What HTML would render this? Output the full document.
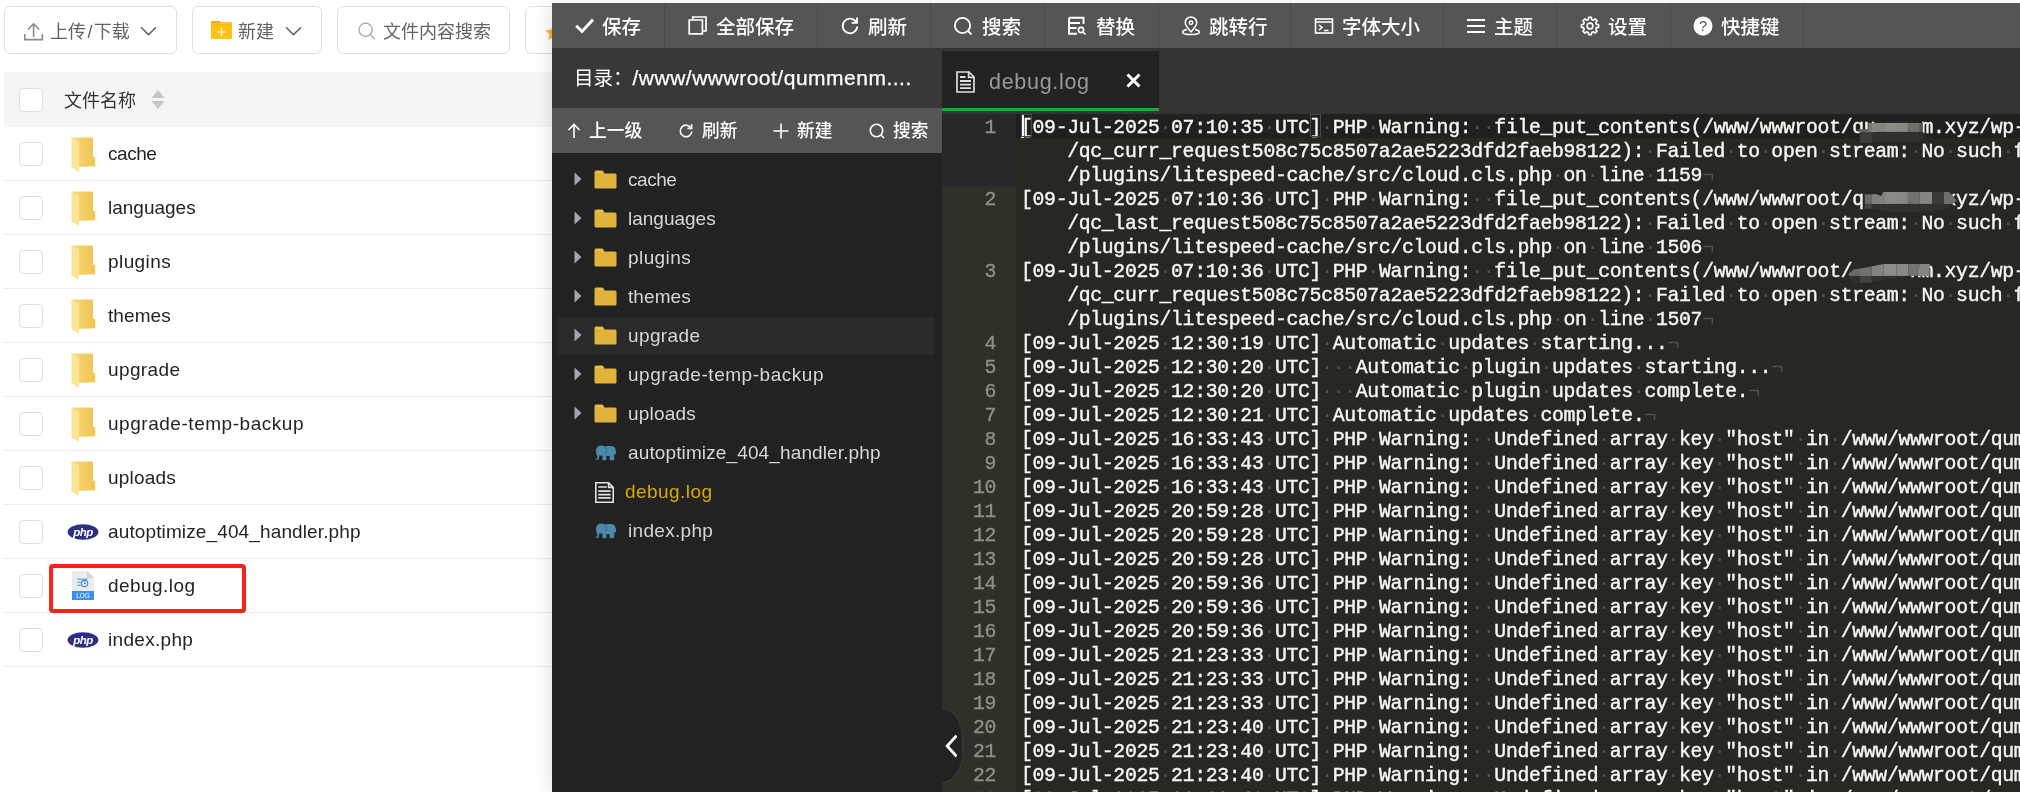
<!DOCTYPE html>
<html lang="zh-CN"><head><meta charset="utf-8"><title>debug.log</title>
<style>
html,body{margin:0;padding:0}
body{will-change:transform;width:2020px;height:792px;overflow:hidden;background:#fff;position:relative;
 font-family:"Liberation Sans","Noto Sans CJK SC",sans-serif;color:#333;font-size:18px}
.abs{position:absolute}
/* left panel */
.btn{position:absolute;top:6px;height:48px;box-sizing:border-box;border:1px solid #dcdfe6;border-radius:6px;background:#fff;color:#606266}
.btn span{position:absolute;top:1.5px;line-height:46px;font-size:18px;white-space:nowrap}
.btn svg{position:absolute}
.thead{position:absolute;left:4px;top:72px;width:560px;height:54px;background:#f5f5f5}
.ck{position:absolute;left:19px;width:24px;height:24px;box-sizing:border-box;border:1px solid #dcdfe6;border-radius:4px;background:#fff}
.row{position:absolute;left:4px;width:560px;height:54px;box-sizing:border-box;border-bottom:1px solid #ececec}
.fn{position:absolute;left:108px;font-size:19px;letter-spacing:0.5px;line-height:54px;color:#242424;white-space:nowrap}
/* dark panel */
#dp{position:absolute;left:552px;top:3px;width:1468px;height:789px;background:#333;box-shadow:-1px 0 16px rgba(0,0,0,.13)}
#tb{position:absolute;left:0;top:0;width:1468px;height:45px;background:#555}
.ti{position:absolute;top:0;height:45px;box-sizing:border-box;border-right:1px solid #4a4a4a;color:#fff;font-size:19.5px;line-height:45px;white-space:nowrap}
.ti span{position:absolute;top:2px;font-weight:500}
.ti svg{position:absolute}
#dir{position:absolute;left:0;top:45px;width:390px;height:60px;background:#383838;color:#fff;font-size:19.5px;line-height:60px;white-space:nowrap}
#stb{position:absolute;left:0;top:105px;width:390px;height:45px;background:#555;color:#fff;font-size:17.7px;line-height:45px;white-space:nowrap}
#stb span{position:absolute;top:1px;font-weight:500}
#stb svg{position:absolute}
#tree{position:absolute;left:0;top:150px;width:390px;height:639px;background:#222}
.tn{position:absolute;left:0;width:390px;height:39px;line-height:39px;color:#d6d6d6;font-size:19px;letter-spacing:0.5px;white-space:nowrap}
.tn span{position:absolute;left:76px;top:0}
.tn svg{position:absolute}
/* editor */
#tabbar{position:absolute;left:390px;top:45px;width:1078px;height:66px;background:#333}
#tab{position:absolute;left:0;top:3px;width:217px;height:57px;background:#222;border-bottom:3px solid #20a53a;color:#999;font-size:21.5px;letter-spacing:0.7px;line-height:62px;white-space:nowrap}
#ed{position:absolute;left:390px;top:111px;width:1078px;height:678px;background:#272822;overflow:hidden;
 font-family:"Liberation Mono","DejaVu Sans Mono",monospace;font-size:19.8px;letter-spacing:-0.327px;line-height:24px;color:#f8f8f2}
#gut{position:absolute;left:0;top:0;width:74px;height:678px;background:#2f3129;color:#8f908a}
.gn{position:absolute;right:20px;height:24px;line-height:24px;white-space:pre;margin-top:2px;-webkit-text-stroke:0.3px #8f908a}
.ln{position:absolute;left:79px;height:24px;line-height:24px;white-space:pre;margin-top:2px;-webkit-text-stroke:0.4px #f8f8f2}
.ln b{font-weight:normal;color:transparent;-webkit-text-stroke:0}
.ln i{font-style:normal;color:#52524d;-webkit-text-stroke:0}

</style></head>
<body>
<div id="left">
<div class="btn" style="left:4px;width:173px"><svg style="left:19px;top:15px" width="20" height="20" viewBox="0 0 20 20" fill="none" stroke="#8a8a8a" stroke-width="1.6"><path d="M9.6 15 V1.8 M4 7.5 L9.6 1.8 L15.2 7.5 M0.8 12 V17.6 H18.4 V12"/></svg><span style="left:45px">上传<b style="font-weight:normal;padding:0 1.4px">/</b>下载</span><svg style="left:135px;top:19px" width="18" height="11" viewBox="0 0 18 11" fill="none" stroke="#606266" stroke-width="1.5"><path d="M1 1.2 L8.5 8.6 L16 1.2"/></svg></div>
<div class="btn" style="left:192px;width:130px"><svg style="left:18px;top:14px" width="21" height="18" viewBox="0 0 21 18"><path d="M0 1 Q0 0 1 0 H8.5 L10 1.3 H20 Q21 1.3 21 2.3 V5 H0 Z" fill="#fba50c"/><path d="M0 3.6 H21 V17 Q21 18 20 18 H1 Q0 18 0 17 Z" fill="#ffc30f"/><path d="M1.2 2.6 H19.8" stroke="#fdd66a" stroke-width="0.7"/><path d="M10.5 6.7 V15.3 M6.2 11 H14.8" stroke="#fff" stroke-width="1.2"/></svg><span style="left:45px">新建</span><svg style="left:92px;top:19px" width="18" height="11" viewBox="0 0 18 11" fill="none" stroke="#606266" stroke-width="1.5"><path d="M1 1.2 L8.5 8.6 L16 1.2"/></svg></div>
<div class="btn" style="left:337px;width:173px"><svg style="left:20px;top:15px" width="19" height="19" viewBox="0 0 19 19" fill="none" stroke="#a6a8ad" stroke-width="1.3"><circle cx="7.6" cy="7.8" r="6.6"/><path d="M12.4 12.6 L17 17.2"/></svg><span style="left:45px">文件内容搜索</span></div>
<div class="btn" style="left:525px;width:120px"><svg style="left:19px;top:17px" width="17" height="17" viewBox="0 0 20 20"><path d="M10 0.5 L12.9 6.7 L19.6 7.5 L14.7 12.1 L16 18.8 L10 15.5 L4 18.8 L5.3 12.1 L0.4 7.5 L7.1 6.7 Z" fill="#fcb427"/></svg></div>
<div class="thead" style="height:55px"><div class="ck" style="left:15px;top:16px"></div><span class="abs" style="left:60px;top:2px;line-height:54px;font-size:18px;color:#333">文件名称</span><svg class="abs" style="left:147px;top:18px" width="14" height="19" viewBox="0 0 14 19"><path d="M7 0 L13.5 8 H0.5 Z M7 19 L13.5 11 H0.5 Z" fill="#c6c6c8"/></svg></div>
<div class="row" style="top:127px"><div class="ck" style="left:15px;top:15px"></div>
<svg class="abs" style="left:67px;top:9.5px" width="25" height="36" viewBox="0 0 25 36">
<defs><linearGradient id="fg0" x1="0" y1="0" x2="1" y2="0"><stop offset="0" stop-color="#f8dc80"/><stop offset="0.45" stop-color="#f3cf66"/><stop offset="1" stop-color="#efc552"/></linearGradient></defs>
<path d="M0.4 0.6 H22 V19.3 L24.2 20.6 V29.2 L7.9 29.9 V5 Z" fill="url(#fg0)"/>
<path d="M0.4 0.6 L7.9 5 V35 L0.4 30.2 Z" fill="#fbe496"/>
</svg>
<span class="fn" style="left:104px;letter-spacing:-0.47px">cache</span></div>
<div class="row" style="top:181px"><div class="ck" style="left:15px;top:15px"></div>
<svg class="abs" style="left:67px;top:9.5px" width="25" height="36" viewBox="0 0 25 36">
<defs><linearGradient id="fg1" x1="0" y1="0" x2="1" y2="0"><stop offset="0" stop-color="#f8dc80"/><stop offset="0.45" stop-color="#f3cf66"/><stop offset="1" stop-color="#efc552"/></linearGradient></defs>
<path d="M0.4 0.6 H22 V19.3 L24.2 20.6 V29.2 L7.9 29.9 V5 Z" fill="url(#fg1)"/>
<path d="M0.4 0.6 L7.9 5 V35 L0.4 30.2 Z" fill="#fbe496"/>
</svg>
<span class="fn" style="left:104px;letter-spacing:-0.005px">languages</span></div>
<div class="row" style="top:235px"><div class="ck" style="left:15px;top:15px"></div>
<svg class="abs" style="left:67px;top:9.5px" width="25" height="36" viewBox="0 0 25 36">
<defs><linearGradient id="fg2" x1="0" y1="0" x2="1" y2="0"><stop offset="0" stop-color="#f8dc80"/><stop offset="0.45" stop-color="#f3cf66"/><stop offset="1" stop-color="#efc552"/></linearGradient></defs>
<path d="M0.4 0.6 H22 V19.3 L24.2 20.6 V29.2 L7.9 29.9 V5 Z" fill="url(#fg2)"/>
<path d="M0.4 0.6 L7.9 5 V35 L0.4 30.2 Z" fill="#fbe496"/>
</svg>
<span class="fn" style="left:104px;letter-spacing:0.421px">plugins</span></div>
<div class="row" style="top:289px"><div class="ck" style="left:15px;top:15px"></div>
<svg class="abs" style="left:67px;top:9.5px" width="25" height="36" viewBox="0 0 25 36">
<defs><linearGradient id="fg3" x1="0" y1="0" x2="1" y2="0"><stop offset="0" stop-color="#f8dc80"/><stop offset="0.45" stop-color="#f3cf66"/><stop offset="1" stop-color="#efc552"/></linearGradient></defs>
<path d="M0.4 0.6 H22 V19.3 L24.2 20.6 V29.2 L7.9 29.9 V5 Z" fill="url(#fg3)"/>
<path d="M0.4 0.6 L7.9 5 V35 L0.4 30.2 Z" fill="#fbe496"/>
</svg>
<span class="fn" style="left:104px;letter-spacing:0.084px">themes</span></div>
<div class="row" style="top:343px"><div class="ck" style="left:15px;top:15px"></div>
<svg class="abs" style="left:67px;top:9.5px" width="25" height="36" viewBox="0 0 25 36">
<defs><linearGradient id="fg4" x1="0" y1="0" x2="1" y2="0"><stop offset="0" stop-color="#f8dc80"/><stop offset="0.45" stop-color="#f3cf66"/><stop offset="1" stop-color="#efc552"/></linearGradient></defs>
<path d="M0.4 0.6 H22 V19.3 L24.2 20.6 V29.2 L7.9 29.9 V5 Z" fill="url(#fg4)"/>
<path d="M0.4 0.6 L7.9 5 V35 L0.4 30.2 Z" fill="#fbe496"/>
</svg>
<span class="fn" style="left:104px;letter-spacing:0.386px">upgrade</span></div>
<div class="row" style="top:397px"><div class="ck" style="left:15px;top:15px"></div>
<svg class="abs" style="left:67px;top:9.5px" width="25" height="36" viewBox="0 0 25 36">
<defs><linearGradient id="fg5" x1="0" y1="0" x2="1" y2="0"><stop offset="0" stop-color="#f8dc80"/><stop offset="0.45" stop-color="#f3cf66"/><stop offset="1" stop-color="#efc552"/></linearGradient></defs>
<path d="M0.4 0.6 H22 V19.3 L24.2 20.6 V29.2 L7.9 29.9 V5 Z" fill="url(#fg5)"/>
<path d="M0.4 0.6 L7.9 5 V35 L0.4 30.2 Z" fill="#fbe496"/>
</svg>
<span class="fn" style="left:104px;letter-spacing:0.535px">upgrade-temp-backup</span></div>
<div class="row" style="top:451px"><div class="ck" style="left:15px;top:15px"></div>
<svg class="abs" style="left:67px;top:9.5px" width="25" height="36" viewBox="0 0 25 36">
<defs><linearGradient id="fg6" x1="0" y1="0" x2="1" y2="0"><stop offset="0" stop-color="#f8dc80"/><stop offset="0.45" stop-color="#f3cf66"/><stop offset="1" stop-color="#efc552"/></linearGradient></defs>
<path d="M0.4 0.6 H22 V19.3 L24.2 20.6 V29.2 L7.9 29.9 V5 Z" fill="url(#fg6)"/>
<path d="M0.4 0.6 L7.9 5 V35 L0.4 30.2 Z" fill="#fbe496"/>
</svg>
<span class="fn" style="left:104px;letter-spacing:0.213px">uploads</span></div>
<div class="row" style="top:505px"><div class="ck" style="left:15px;top:15px"></div>
<svg class="abs" style="left:63px;top:17.5px" width="32" height="18" viewBox="0 0 32 18">
<ellipse cx="16" cy="9" rx="15.4" ry="7.7" fill="#2d2f80"/>
<text x="16" y="13" text-anchor="middle" font-family="Liberation Sans, sans-serif" font-style="italic" font-weight="bold" font-size="11.5" fill="#fff" letter-spacing="-0.6">php</text>
</svg>
<span class="fn" style="left:104px;letter-spacing:0.125px">autoptimize_404_handler.php</span></div>
<div class="row" style="top:559px"><div class="ck" style="left:15px;top:15px"></div>
<svg class="abs" style="left:67px;top:12px" width="24" height="30" viewBox="0 0 24 30">
<path d="M1 0 H16 L23 7 V29 H1 Z" fill="#ebebec"/>
<path d="M16 0 L23 7 H16 Z" fill="#d6d6cc"/>
<rect x="1" y="20" width="22" height="9" fill="#3b8fe8"/>
<text x="12" y="27.3" text-anchor="middle" font-family="Liberation Sans, sans-serif" font-size="6.5" fill="#fff">LOG</text>
<circle cx="13.5" cy="12.5" r="3.2" fill="none" stroke="#3b8fe8" stroke-width="1.2"/>
<path d="M13.5 10.8 V12.7 H15" fill="none" stroke="#3b8fe8" stroke-width="1"/>
<path d="M6.5 8.2 H16.5 M6.5 11.2 H9.5 M6.5 14.2 H9.5" stroke="#3b8fe8" stroke-width="1.1"/>
</svg>
<span class="fn" style="left:104px;letter-spacing:0.435px">debug.log</span></div>
<div class="row" style="top:613px"><div class="ck" style="left:15px;top:15px"></div>
<svg class="abs" style="left:63px;top:17.5px" width="32" height="18" viewBox="0 0 32 18">
<ellipse cx="16" cy="9" rx="15.4" ry="7.7" fill="#2d2f80"/>
<text x="16" y="13" text-anchor="middle" font-family="Liberation Sans, sans-serif" font-style="italic" font-weight="bold" font-size="11.5" fill="#fff" letter-spacing="-0.6">php</text>
</svg>
<span class="fn" style="left:104px;letter-spacing:0.305px">index.php</span></div>
<div class="abs" style="left:49px;top:564px;width:197px;height:49px;box-sizing:border-box;border:4px solid #fa2117;border-radius:4px"></div>
</div>
<div id="dp">
<div id="tb">
<div class="ti" style="left:0px;width:113px"><svg style="left:22px;top:13px" width="20" height="20" viewBox="0 0 20 20" fill="none" stroke="#fff" stroke-width="1.8" ><path d="M2.2 9.8 L8 15.4 L19 3.6" stroke-width="2.9"/></svg><span style="left:50px">保存</span></div>
<div class="ti" style="left:112px;width:154px"><svg style="left:24px;top:13px" width="20" height="20" viewBox="0 0 20 20" fill="none" stroke="#fff" stroke-width="1.7" ><path d="M1.2 4 H14.4 V17.8 H1.2 Z M4.8 4 V1 H18 V14.8 H14.6"/></svg><span style="left:52px">全部保存</span></div>
<div class="ti" style="left:265px;width:114px"><svg style="left:23px;top:13px" width="20" height="20" viewBox="0 0 20 20" fill="none" stroke="#fff" stroke-width="1.8" ><path d="M16.3 6.2 A7.3 7.3 0 1 0 17.3 10.5"/><path d="M17 1.5 V6.8 H11.7"/></svg><span style="left:51px">刷新</span></div>
<div class="ti" style="left:378px;width:115px"><svg style="left:23px;top:13px" width="20" height="20" viewBox="0 0 20 20" fill="none" stroke="#fff" stroke-width="1.8" ><circle cx="9.5" cy="9.5" r="7.6"/><path d="M15 15 L18.5 18.5"/></svg><span style="left:52px">搜索</span></div>
<div class="ti" style="left:492px;width:115px"><svg style="left:23px;top:13px" width="20" height="20" viewBox="0 0 20 20" fill="none" stroke="#fff" stroke-width="1.6" ><path d="M2 1.8 H16.5 V8 M2 1.8 V17.8 H10 M2 7 H13 M2 12 H9.5" stroke-width="1.9"/><circle cx="14" cy="14" r="2.6"/><path d="M16 16 L18.5 18.5"/></svg><span style="left:52px">替换</span></div>
<div class="ti" style="left:606px;width:133px"><svg style="left:23px;top:13px" width="20" height="20" viewBox="0 0 20 20" fill="none" stroke="#fff" stroke-width="1.5" ><path d="M10 15.8 C6 11.2 4.2 9.4 4.2 6.7 A5.8 5.8 0 0 1 15.8 6.7 C15.8 9.4 14 11.2 10 15.8 Z"/><circle cx="10" cy="6.7" r="1.7"/><path d="M6 13.6 C1.6 14.4 0.8 16.2 2.4 17.3 C4.6 18.9 15.4 18.9 17.6 17.3 C19.2 16.2 18.4 14.4 14 13.6"/></svg><span style="left:51px">跳转行</span></div>
<div class="ti" style="left:738px;width:154px"><svg style="left:24px;top:13px" width="20" height="20" viewBox="0 0 20 20" fill="none" stroke="#fff" stroke-width="1.6" ><rect x="1.5" y="3" width="17" height="14"/><path d="M1.5 6 H18.5"/><path d="M5 9 L8 11.5 L5 14 M10 14.5 H14.5"/></svg><span style="left:52px">字体大小</span></div>
<div class="ti" style="left:891px;width:114px"><svg style="left:23px;top:13px" width="20" height="20" viewBox="0 0 20 20" fill="none" stroke="#fff" stroke-width="2.1" ><path d="M1 4 H19 M1 10 H19 M1 16 H19"/></svg><span style="left:51px">主题</span></div>
<div class="ti" style="left:1004px;width:115px"><svg style="left:24px;top:13px" width="20" height="20" viewBox="0 0 20 20" fill="none" stroke="#fff" stroke-width="1.6" ><circle cx="10" cy="10" r="2.9"/><path d="M8.38 3.50 L8.57 1.42 L11.43 1.42 L11.62 3.50 L13.46 4.26 L15.06 2.92 L17.08 4.94 L15.74 6.54 L16.50 8.38 L18.58 8.57 L18.58 11.43 L16.50 11.62 L15.74 13.46 L17.08 15.06 L15.06 17.08 L13.46 15.74 L11.62 16.50 L11.43 18.58 L8.57 18.58 L8.38 16.50 L6.54 15.74 L4.94 17.08 L2.92 15.06 L4.26 13.46 L3.50 11.62 L1.42 11.43 L1.42 8.57 L3.50 8.38 L4.26 6.54 L2.92 4.94 L4.94 2.92 L6.54 4.26 Z" stroke-linejoin="round"/></svg><span style="left:52px">设置</span></div>
<div class="ti" style="left:1118px;width:134px"><svg style="left:23px;top:13px" width="20" height="20" viewBox="0 0 20 20"><circle cx="10" cy="10" r="9.5" fill="#fff"/><text x="10" y="15" text-anchor="middle" font-family="Liberation Sans, sans-serif" font-size="14.5" fill="#555">?</text></svg><span style="left:51px">快捷键</span></div>
</div>
<div id="dir"><span class="abs" style="left:22px;top:0;font-weight:500"><span style="font-weight:400">目录：</span><span style="font-size:21px;letter-spacing:0.5px;font-weight:400;-webkit-text-stroke:0.25px #fff">/www/wwwroot/qummenm....</span></span></div>
<div id="stb">
<svg style="left:14px;top:15px" width="16" height="16" viewBox="0 0 16 16" fill="none" stroke="#fff" stroke-width="1.6"><path d="M8 15 V1.5 M2.5 7 L8 1.5 L13.5 7"/></svg><span style="left:37px">上一级</span>
<svg style="left:126px;top:15px" width="16" height="16" viewBox="0 0 16 16" fill="none" stroke="#fff" stroke-width="1.6"><path d="M13 5 A5.8 5.8 0 1 0 13.8 8.5"/><path d="M13.6 1.2 V5.4 H9.4"/></svg><span style="left:150px">刷新</span>
<svg style="left:221px;top:15px" width="16" height="16" viewBox="0 0 16 16" fill="none" stroke="#fff" stroke-width="1.6"><path d="M8 0.5 V15.5 M0.5 8 H15.5"/></svg><span style="left:245px">新建</span>
<svg style="left:317px;top:15px" width="16" height="16" viewBox="0 0 16 16" fill="none" stroke="#fff" stroke-width="1.6"><circle cx="7.5" cy="7.5" r="6.2"/><path d="M12 12 L15 15"/></svg><span style="left:341px">搜索</span>
</div>
<div id="tree">
<div class="abs" style="left:6px;top:164px;width:376px;height:38px;background:#2a2a2a"></div>
<div class="tn" style="top:7px"><svg style="left:22px;top:12px" width="8" height="14" viewBox="0 0 8 14"><path d="M0.5 0.5 L7.5 7 L0.5 13.5 Z" fill="#a2a4b4"/></svg><svg style="left:42px;top:10px" width="23" height="19" viewBox="0 0 23 19"><path d="M0.5 2 Q0.5 0.5 2 0.5 H8 Q9 0.5 9.5 1.5 L10.5 3.5 H21 Q22.5 3.5 22.5 5 V17 Q22.5 18.5 21 18.5 H2 Q0.5 18.5 0.5 17 Z" fill="#e2b33c"/><path d="M3 2.2 H8.2" stroke="#f1cf6e" stroke-width="1"/></svg><span style="letter-spacing:-0.47px">cache</span></div>
<div class="tn" style="top:46px"><svg style="left:22px;top:12px" width="8" height="14" viewBox="0 0 8 14"><path d="M0.5 0.5 L7.5 7 L0.5 13.5 Z" fill="#a2a4b4"/></svg><svg style="left:42px;top:10px" width="23" height="19" viewBox="0 0 23 19"><path d="M0.5 2 Q0.5 0.5 2 0.5 H8 Q9 0.5 9.5 1.5 L10.5 3.5 H21 Q22.5 3.5 22.5 5 V17 Q22.5 18.5 21 18.5 H2 Q0.5 18.5 0.5 17 Z" fill="#e2b33c"/><path d="M3 2.2 H8.2" stroke="#f1cf6e" stroke-width="1"/></svg><span style="letter-spacing:-0.005px">languages</span></div>
<div class="tn" style="top:85px"><svg style="left:22px;top:12px" width="8" height="14" viewBox="0 0 8 14"><path d="M0.5 0.5 L7.5 7 L0.5 13.5 Z" fill="#a2a4b4"/></svg><svg style="left:42px;top:10px" width="23" height="19" viewBox="0 0 23 19"><path d="M0.5 2 Q0.5 0.5 2 0.5 H8 Q9 0.5 9.5 1.5 L10.5 3.5 H21 Q22.5 3.5 22.5 5 V17 Q22.5 18.5 21 18.5 H2 Q0.5 18.5 0.5 17 Z" fill="#e2b33c"/><path d="M3 2.2 H8.2" stroke="#f1cf6e" stroke-width="1"/></svg><span style="letter-spacing:0.421px">plugins</span></div>
<div class="tn" style="top:124px"><svg style="left:22px;top:12px" width="8" height="14" viewBox="0 0 8 14"><path d="M0.5 0.5 L7.5 7 L0.5 13.5 Z" fill="#a2a4b4"/></svg><svg style="left:42px;top:10px" width="23" height="19" viewBox="0 0 23 19"><path d="M0.5 2 Q0.5 0.5 2 0.5 H8 Q9 0.5 9.5 1.5 L10.5 3.5 H21 Q22.5 3.5 22.5 5 V17 Q22.5 18.5 21 18.5 H2 Q0.5 18.5 0.5 17 Z" fill="#e2b33c"/><path d="M3 2.2 H8.2" stroke="#f1cf6e" stroke-width="1"/></svg><span style="letter-spacing:0.084px">themes</span></div>
<div class="tn" style="top:163px"><svg style="left:22px;top:12px" width="8" height="14" viewBox="0 0 8 14"><path d="M0.5 0.5 L7.5 7 L0.5 13.5 Z" fill="#a2a4b4"/></svg><svg style="left:42px;top:10px" width="23" height="19" viewBox="0 0 23 19"><path d="M0.5 2 Q0.5 0.5 2 0.5 H8 Q9 0.5 9.5 1.5 L10.5 3.5 H21 Q22.5 3.5 22.5 5 V17 Q22.5 18.5 21 18.5 H2 Q0.5 18.5 0.5 17 Z" fill="#e2b33c"/><path d="M3 2.2 H8.2" stroke="#f1cf6e" stroke-width="1"/></svg><span style="letter-spacing:0.386px">upgrade</span></div>
<div class="tn" style="top:202px"><svg style="left:22px;top:12px" width="8" height="14" viewBox="0 0 8 14"><path d="M0.5 0.5 L7.5 7 L0.5 13.5 Z" fill="#a2a4b4"/></svg><svg style="left:42px;top:10px" width="23" height="19" viewBox="0 0 23 19"><path d="M0.5 2 Q0.5 0.5 2 0.5 H8 Q9 0.5 9.5 1.5 L10.5 3.5 H21 Q22.5 3.5 22.5 5 V17 Q22.5 18.5 21 18.5 H2 Q0.5 18.5 0.5 17 Z" fill="#e2b33c"/><path d="M3 2.2 H8.2" stroke="#f1cf6e" stroke-width="1"/></svg><span style="letter-spacing:0.535px">upgrade-temp-backup</span></div>
<div class="tn" style="top:241px"><svg style="left:22px;top:12px" width="8" height="14" viewBox="0 0 8 14"><path d="M0.5 0.5 L7.5 7 L0.5 13.5 Z" fill="#a2a4b4"/></svg><svg style="left:42px;top:10px" width="23" height="19" viewBox="0 0 23 19"><path d="M0.5 2 Q0.5 0.5 2 0.5 H8 Q9 0.5 9.5 1.5 L10.5 3.5 H21 Q22.5 3.5 22.5 5 V17 Q22.5 18.5 21 18.5 H2 Q0.5 18.5 0.5 17 Z" fill="#e2b33c"/><path d="M3 2.2 H8.2" stroke="#f1cf6e" stroke-width="1"/></svg><span style="letter-spacing:0.213px">uploads</span></div>
<div class="tn" style="top:280px"><svg style="left:43px;top:12px" width="22" height="16" viewBox="0 0 22 16"><g fill="#4b89a9"><circle cx="6" cy="5.6" r="5.1"/><rect x="7" y="1" width="13.6" height="10" rx="4.5"/><rect x="7.4" y="8" width="4" height="7.2" rx="0.8"/><rect x="14.6" y="8" width="4.6" height="7.2" rx="0.8"/><path d="M1.2 6.5 C1 9 2 11 2.6 12.2 C3 13.4 2 14 0.9 13.5 L0.6 14.6 C3 15.6 4.6 14 4.2 12 C4 10.5 4.4 9.5 5 9 Z"/><path d="M20 4.5 C21.2 6 21.2 8 20.8 9.5 L19.8 9 Z"/></g><path d="M9.4 1.4 C12 2.5 12.5 6.5 9.6 8.6" fill="none" stroke="#2d6686" stroke-width="0.9"/></svg><span style="letter-spacing:0.125px">autoptimize_404_handler.php</span></div>
<div class="tn" style="top:319px"><svg style="left:42.5px;top:10px" width="19" height="21" viewBox="0 0 19 21" fill="none" stroke="#e2e2e2" stroke-width="1.6"><path d="M0.8 0.8 H13.6 L18.2 5.4 V20.2 H0.8 Z M13.6 0.8 V5.4 H18.2" stroke-linejoin="miter"/><path d="M3.3 5 H11.8 M3.3 9.1 H15.6 M3.3 12.6 H15.6 M3.3 15.9 H15.6"/></svg><span style="left:73px;color:#d8aa00;letter-spacing:0.435px">debug.log</span></div>
<div class="tn" style="top:358px"><svg style="left:43px;top:12px" width="22" height="16" viewBox="0 0 22 16"><g fill="#4b89a9"><circle cx="6" cy="5.6" r="5.1"/><rect x="7" y="1" width="13.6" height="10" rx="4.5"/><rect x="7.4" y="8" width="4" height="7.2" rx="0.8"/><rect x="14.6" y="8" width="4.6" height="7.2" rx="0.8"/><path d="M1.2 6.5 C1 9 2 11 2.6 12.2 C3 13.4 2 14 0.9 13.5 L0.6 14.6 C3 15.6 4.6 14 4.2 12 C4 10.5 4.4 9.5 5 9 Z"/><path d="M20 4.5 C21.2 6 21.2 8 20.8 9.5 L19.8 9 Z"/></g><path d="M9.4 1.4 C12 2.5 12.5 6.5 9.6 8.6" fill="none" stroke="#2d6686" stroke-width="0.9"/></svg><span style="letter-spacing:0.305px">index.php</span></div>
</div>
<div id="tabbar"><div id="tab"><svg class="abs" style="left:14px;top:20px" width="19" height="22" viewBox="0 0 19 22" fill="none" stroke="#dedede" stroke-width="1.7"><path d="M1 1 H13 L18 6 V21 H1 Z M12.6 1.4 V6.4 H17.6" stroke-linejoin="miter"/><path d="M4 6 H9.5 M4 10 H15 M4 13.6 H15 M4 17.2 H15" stroke-width="1.8"/></svg><span class="abs" style="left:47px;top:0">debug.log</span><svg class="abs" style="left:184px;top:22px" width="15" height="15" viewBox="0 0 15 15" stroke="#fff" stroke-width="3" fill="none"><path d="M1.5 1.5 L13.5 13.5 M13.5 1.5 L1.5 13.5"/></svg></div></div>
<div id="ed">
<div class="abs" style="left:74px;top:0;width:1010px;height:24px;background:#202020"></div>
<div id="gut"><div class="abs" style="left:0;top:0;width:74px;height:72px;background:#272727"></div>
<div class="gn" style="top:0px">1</div>
<div class="gn" style="top:72px">2</div>
<div class="gn" style="top:144px">3</div>
<div class="gn" style="top:216px">4</div>
<div class="gn" style="top:240px">5</div>
<div class="gn" style="top:264px">6</div>
<div class="gn" style="top:288px">7</div>
<div class="gn" style="top:312px">8</div>
<div class="gn" style="top:336px">9</div>
<div class="gn" style="top:360px">10</div>
<div class="gn" style="top:384px">11</div>
<div class="gn" style="top:408px">12</div>
<div class="gn" style="top:432px">13</div>
<div class="gn" style="top:456px">14</div>
<div class="gn" style="top:480px">15</div>
<div class="gn" style="top:504px">16</div>
<div class="gn" style="top:528px">17</div>
<div class="gn" style="top:552px">18</div>
<div class="gn" style="top:576px">19</div>
<div class="gn" style="top:600px">20</div>
<div class="gn" style="top:624px">21</div>
<div class="gn" style="top:648px">22</div>
<div class="gn" style="top:672px">23</div>
</div>
<div class="ln" style="top:0px">[09-Jul-2025<i>·</i>07:10:35<i>·</i>UTC]<i>·</i>PHP<i>·</i>Warning:<i>·</i><i>·</i>file_put_contents(/www/wwwroot/qu<b>mmen</b>m.xyz/wp-content/litespeed/cloud</div>
<div class="ln" style="top:24px">    /qc_curr_request508c75c8507a2ae5223dfd2faeb98122):<i>·</i>Failed<i>·</i>to<i>·</i>open<i>·</i>stream:<i>·</i>No<i>·</i>such<i>·</i>file<i>·</i>or<i>·</i>directory<i>·</i>in<i>·</i>/www/wwwroot</div>
<div class="ln" style="top:48px">    /plugins/litespeed-cache/src/cloud.cls.php<i>·</i>on<i>·</i>line<i>·</i>1159<i>¬</i></div>
<div class="ln" style="top:72px">[09-Jul-2025<i>·</i>07:10:36<i>·</i>UTC]<i>·</i>PHP<i>·</i>Warning:<i>·</i><i>·</i>file_put_contents(/www/wwwroot/q<b>ummenm.</b>xyz/wp-content/litespeed/cloud</div>
<div class="ln" style="top:96px">    /qc_last_request508c75c8507a2ae5223dfd2faeb98122):<i>·</i>Failed<i>·</i>to<i>·</i>open<i>·</i>stream:<i>·</i>No<i>·</i>such<i>·</i>file<i>·</i>or<i>·</i>directory<i>·</i>in<i>·</i>/www/wwwroot</div>
<div class="ln" style="top:120px">    /plugins/litespeed-cache/src/cloud.cls.php<i>·</i>on<i>·</i>line<i>·</i>1506<i>¬</i></div>
<div class="ln" style="top:144px">[09-Jul-2025<i>·</i>07:10:36<i>·</i>UTC]<i>·</i>PHP<i>·</i>Warning:<i>·</i><i>·</i>file_put_contents(/www/wwwroot/<b>qumme</b>nm.xyz/wp-content/litespeed/cloud</div>
<div class="ln" style="top:168px">    /qc_curr_request508c75c8507a2ae5223dfd2faeb98122):<i>·</i>Failed<i>·</i>to<i>·</i>open<i>·</i>stream:<i>·</i>No<i>·</i>such<i>·</i>file<i>·</i>or<i>·</i>directory<i>·</i>in<i>·</i>/www/wwwroot</div>
<div class="ln" style="top:192px">    /plugins/litespeed-cache/src/cloud.cls.php<i>·</i>on<i>·</i>line<i>·</i>1507<i>¬</i></div>
<div class="ln" style="top:216px">[09-Jul-2025<i>·</i>12:30:19<i>·</i>UTC]<i>·</i>Automatic<i>·</i>updates<i>·</i>starting...<i>¬</i></div>
<div class="ln" style="top:240px">[09-Jul-2025<i>·</i>12:30:20<i>·</i>UTC]<i>·</i><i>·</i><i>·</i>Automatic<i>·</i>plugin<i>·</i>updates<i>·</i>starting...<i>¬</i></div>
<div class="ln" style="top:264px">[09-Jul-2025<i>·</i>12:30:20<i>·</i>UTC]<i>·</i><i>·</i><i>·</i>Automatic<i>·</i>plugin<i>·</i>updates<i>·</i>complete.<i>¬</i></div>
<div class="ln" style="top:288px">[09-Jul-2025<i>·</i>12:30:21<i>·</i>UTC]<i>·</i>Automatic<i>·</i>updates<i>·</i>complete.<i>¬</i></div>
<div class="ln" style="top:312px">[09-Jul-2025<i>·</i>16:33:43<i>·</i>UTC]<i>·</i>PHP<i>·</i>Warning:<i>·</i><i>·</i>Undefined<i>·</i>array<i>·</i>key<i>·</i>"host"<i>·</i>in<i>·</i>/www/wwwroot/qummenm.xyz/wp-content/plugins/litespeed-cache/src/cdn.cls.php</div>
<div class="ln" style="top:336px">[09-Jul-2025<i>·</i>16:33:43<i>·</i>UTC]<i>·</i>PHP<i>·</i>Warning:<i>·</i><i>·</i>Undefined<i>·</i>array<i>·</i>key<i>·</i>"host"<i>·</i>in<i>·</i>/www/wwwroot/qummenm.xyz/wp-content/plugins/litespeed-cache/src/cdn.cls.php</div>
<div class="ln" style="top:360px">[09-Jul-2025<i>·</i>16:33:43<i>·</i>UTC]<i>·</i>PHP<i>·</i>Warning:<i>·</i><i>·</i>Undefined<i>·</i>array<i>·</i>key<i>·</i>"host"<i>·</i>in<i>·</i>/www/wwwroot/qummenm.xyz/wp-content/plugins/litespeed-cache/src/cdn.cls.php</div>
<div class="ln" style="top:384px">[09-Jul-2025<i>·</i>20:59:28<i>·</i>UTC]<i>·</i>PHP<i>·</i>Warning:<i>·</i><i>·</i>Undefined<i>·</i>array<i>·</i>key<i>·</i>"host"<i>·</i>in<i>·</i>/www/wwwroot/qummenm.xyz/wp-content/plugins/litespeed-cache/src/cdn.cls.php</div>
<div class="ln" style="top:408px">[09-Jul-2025<i>·</i>20:59:28<i>·</i>UTC]<i>·</i>PHP<i>·</i>Warning:<i>·</i><i>·</i>Undefined<i>·</i>array<i>·</i>key<i>·</i>"host"<i>·</i>in<i>·</i>/www/wwwroot/qummenm.xyz/wp-content/plugins/litespeed-cache/src/cdn.cls.php</div>
<div class="ln" style="top:432px">[09-Jul-2025<i>·</i>20:59:28<i>·</i>UTC]<i>·</i>PHP<i>·</i>Warning:<i>·</i><i>·</i>Undefined<i>·</i>array<i>·</i>key<i>·</i>"host"<i>·</i>in<i>·</i>/www/wwwroot/qummenm.xyz/wp-content/plugins/litespeed-cache/src/cdn.cls.php</div>
<div class="ln" style="top:456px">[09-Jul-2025<i>·</i>20:59:36<i>·</i>UTC]<i>·</i>PHP<i>·</i>Warning:<i>·</i><i>·</i>Undefined<i>·</i>array<i>·</i>key<i>·</i>"host"<i>·</i>in<i>·</i>/www/wwwroot/qummenm.xyz/wp-content/plugins/litespeed-cache/src/cdn.cls.php</div>
<div class="ln" style="top:480px">[09-Jul-2025<i>·</i>20:59:36<i>·</i>UTC]<i>·</i>PHP<i>·</i>Warning:<i>·</i><i>·</i>Undefined<i>·</i>array<i>·</i>key<i>·</i>"host"<i>·</i>in<i>·</i>/www/wwwroot/qummenm.xyz/wp-content/plugins/litespeed-cache/src/cdn.cls.php</div>
<div class="ln" style="top:504px">[09-Jul-2025<i>·</i>20:59:36<i>·</i>UTC]<i>·</i>PHP<i>·</i>Warning:<i>·</i><i>·</i>Undefined<i>·</i>array<i>·</i>key<i>·</i>"host"<i>·</i>in<i>·</i>/www/wwwroot/qummenm.xyz/wp-content/plugins/litespeed-cache/src/cdn.cls.php</div>
<div class="ln" style="top:528px">[09-Jul-2025<i>·</i>21:23:33<i>·</i>UTC]<i>·</i>PHP<i>·</i>Warning:<i>·</i><i>·</i>Undefined<i>·</i>array<i>·</i>key<i>·</i>"host"<i>·</i>in<i>·</i>/www/wwwroot/qummenm.xyz/wp-content/plugins/litespeed-cache/src/cdn.cls.php</div>
<div class="ln" style="top:552px">[09-Jul-2025<i>·</i>21:23:33<i>·</i>UTC]<i>·</i>PHP<i>·</i>Warning:<i>·</i><i>·</i>Undefined<i>·</i>array<i>·</i>key<i>·</i>"host"<i>·</i>in<i>·</i>/www/wwwroot/qummenm.xyz/wp-content/plugins/litespeed-cache/src/cdn.cls.php</div>
<div class="ln" style="top:576px">[09-Jul-2025<i>·</i>21:23:33<i>·</i>UTC]<i>·</i>PHP<i>·</i>Warning:<i>·</i><i>·</i>Undefined<i>·</i>array<i>·</i>key<i>·</i>"host"<i>·</i>in<i>·</i>/www/wwwroot/qummenm.xyz/wp-content/plugins/litespeed-cache/src/cdn.cls.php</div>
<div class="ln" style="top:600px">[09-Jul-2025<i>·</i>21:23:40<i>·</i>UTC]<i>·</i>PHP<i>·</i>Warning:<i>·</i><i>·</i>Undefined<i>·</i>array<i>·</i>key<i>·</i>"host"<i>·</i>in<i>·</i>/www/wwwroot/qummenm.xyz/wp-content/plugins/litespeed-cache/src/cdn.cls.php</div>
<div class="ln" style="top:624px">[09-Jul-2025<i>·</i>21:23:40<i>·</i>UTC]<i>·</i>PHP<i>·</i>Warning:<i>·</i><i>·</i>Undefined<i>·</i>array<i>·</i>key<i>·</i>"host"<i>·</i>in<i>·</i>/www/wwwroot/qummenm.xyz/wp-content/plugins/litespeed-cache/src/cdn.cls.php</div>
<div class="ln" style="top:648px">[09-Jul-2025<i>·</i>21:23:40<i>·</i>UTC]<i>·</i>PHP<i>·</i>Warning:<i>·</i><i>·</i>Undefined<i>·</i>array<i>·</i>key<i>·</i>"host"<i>·</i>in<i>·</i>/www/wwwroot/qummenm.xyz/wp-content/plugins/litespeed-cache/src/cdn.cls.php</div>
<div class="ln" style="top:672px">[09-Jul-2025<i>·</i>21:23:40<i>·</i>UTC]<i>·</i>PHP<i>·</i>Warning:<i>·</i><i>·</i>Undefined<i>·</i>array<i>·</i>key<i>·</i>"host"<i>·</i>in<i>·</i>/www/wwwroot/qummenm.xyz/wp-content/plugins/litespeed-cache/src/cdn.cls.php</div>
<svg class="abs" style="left:898px;top:0" width="130" height="180" viewBox="1840 114 130 180"><rect x="1859.9" y="131.9" width="12.0" height="11.0" fill="#3d3e3a"/><rect x="1871.9" y="131.9" width="47.9" height="10.3" fill="#30312c"/><polygon points="1919.8,131.9 1923.0,131.9 1925.9,135.8 1921.1,140.3 1919.8,141.0" fill="#2d2e29"/><rect x="1858.3" y="129.1" width="13.6" height="2.8" fill="#62625e"/><rect x="1868.3" y="122.9" width="3.6" height="9.0" fill="#7a7a75"/><rect x="1871.9" y="122.9" width="12.2" height="9.0" fill="#85857f"/><rect x="1884.1" y="122.9" width="11.9" height="9.0" fill="#8b8b85"/><rect x="1896.0" y="122.9" width="11.9" height="9.0" fill="#898983"/><rect x="1907.9" y="122.9" width="11.9" height="9.0" fill="#6e6e6a"/><rect x="1919.8" y="122.9" width="3.2" height="9.0" fill="#5a5a56"/><rect x="1864.8" y="203.9" width="7.1" height="4.9" fill="#454642"/><polygon points="1871.9,203.9 1950.7,203.9 1949.4,207.8 1933.3,211.0 1904.4,212.6 1885.0,211.7 1871.9,208.5" fill="#30312c"/><rect x="1864.8" y="194.3" width="7.1" height="9.6" fill="#6a6a66"/><polygon points="1871.9,194.3 1876.0,194.0 1881.2,195.9 1883.1,192.0 1884.1,192.0 1884.1,203.9 1871.9,203.9" fill="#82827d"/><rect x="1884.1" y="192.0" width="11.9" height="11.9" fill="#8b8b85"/><rect x="1896.0" y="192.0" width="11.9" height="11.9" fill="#898983"/><rect x="1907.9" y="192.0" width="11.9" height="11.9" fill="#72726d"/><rect x="1919.8" y="192.0" width="12.2" height="11.9" fill="#868681"/><rect x="1932.0" y="192.0" width="11.9" height="11.9" fill="#3a3b37"/><polygon points="1943.9,192.0 1949.4,192.0 1956.8,200.4 1952.6,203.9 1943.9,203.9" fill="#6c6c68"/><polygon points="1849.3,275.9 1859.9,275.9 1859.9,281.7 1854.5,286.6" fill="#2e2f2a"/><rect x="1859.9" y="275.9" width="11.9" height="6.8" fill="#42433e"/><polygon points="1871.8,275.9 1904.6,275.9 1904.6,276.9 1871.8,281.7" fill="#31322d"/><polygon points="1848.3,274.0 1853.8,269.2 1859.9,268.5 1859.9,275.9 1849.3,275.9" fill="#6a6a65"/><polygon points="1859.9,268.5 1863.5,267.9 1871.8,266.3 1871.8,275.9 1859.9,275.9" fill="#72726d"/><polygon points="1871.8,266.3 1883.7,264.0 1883.7,275.9 1871.8,275.9" fill="#84847f"/><rect x="1883.7" y="264.0" width="12.6" height="11.9" fill="#8d8d87"/><rect x="1896.3" y="264.0" width="11.9" height="11.9" fill="#8b8b85"/><rect x="1908.2" y="264.0" width="11.6" height="11.9" fill="#74746f"/><rect x="1919.8" y="264.0" width="9.9" height="11.9" fill="#868680"/></svg>
<div class="abs" style="left:79px;top:0;width:3px;height:24px;background:#f8f8f0"></div>
<div class="abs" style="left:79px;top:0;width:11px;height:23px;box-sizing:border-box;border:1px solid #49483e"></div>
<div class="abs" style="left:368px;top:0;width:11px;height:23px;box-sizing:border-box;border:1px solid #49483e"></div>
</div>
<div class="abs" style="left:390px;top:705px;width:21px;height:75px;box-sizing:border-box;background:#222;border:1px solid #3a3a3a;border-left:0;border-radius:0 21px 21px 0 / 0 30px 30px 0"><svg class="abs" style="left:3px;top:25px" width="12" height="24" viewBox="0 0 12 24" fill="none" stroke="#fff" stroke-width="2.9"><path d="M11.5 1.6 L2.2 12 L11.5 22.4"/></svg></div>
</div>
<div class="abs" style="left:552px;top:0;width:1468px;height:3px;background:#f9f9f9"></div>
</body></html>
